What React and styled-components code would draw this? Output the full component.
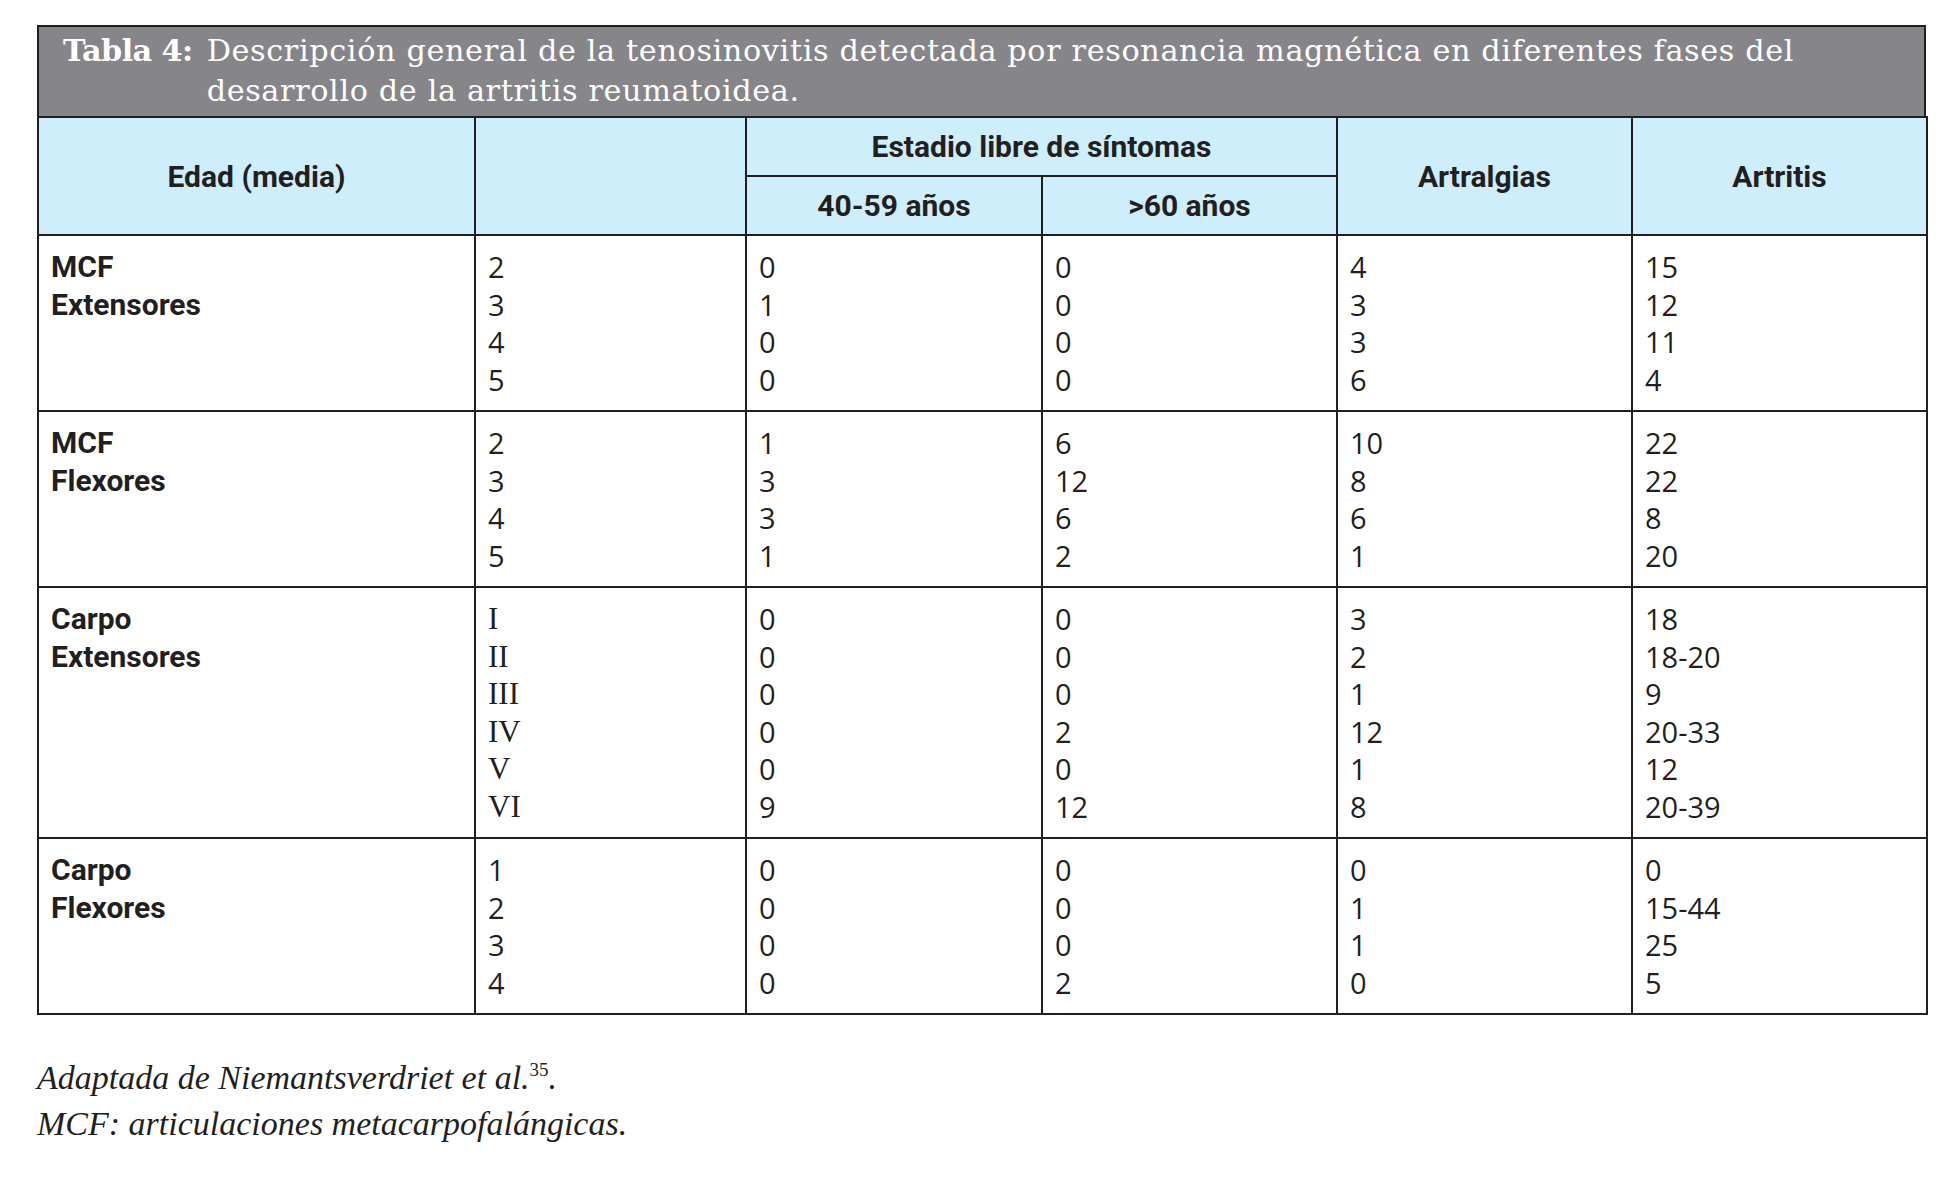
import React from "react";
import styled, { createGlobalStyle } from "styled-components";

const Global = createGlobalStyle`
  html, body { margin: 0; padding: 0; background: #ffffff; }
  body { font-family: "Open Sans", sans-serif; color: #231f20; }
`;

const Page = styled.div`
  padding: 25px 0 0 37px;
  width: 1889px;
`;

const TitleBar = styled.div`
  display: flex;
  gap: 14px;
  background: #868589;
  border: 2px solid #231f20;
  border-bottom: none;
  padding: 4px 24px 5px 24px;
  color: #ffffff;
  font-family: "DejaVu Serif", serif;
  font-size: 30.3px;
  line-height: 40px;
`;

const TitleLabel = styled.span`
  font-weight: 700;
  letter-spacing: -0.6px;
  white-space: nowrap;
`;

const TitleText = styled.span`
  font-weight: 400;
  letter-spacing: 0.62px;
  white-space: nowrap;
`;

const Table = styled.table`
  border-collapse: collapse;
  table-layout: fixed;
  width: 1889px;
`;

const HeadCell = styled.th`
  background: #cdeefa;
  border: 2px solid #231f20;
  height: 57px;
  padding: 0;
  text-align: center;
  vertical-align: middle;
  font-family: Roboto, sans-serif;
  font-weight: 700;
  font-size: 30px;
  color: #231f20;
`;

const Cell = styled.td`
  border: 2px solid #231f20;
  padding: 12px 12px 12px 12px;
  vertical-align: top;
  font-family: ${(p) => (p.$serif ? '"Liberation Serif", serif' : '"Open Sans", sans-serif')};
  font-size: ${(p) => (p.$serif ? "31px" : "29px")};
  line-height: 37.5px;
  color: #231f20;
`;

const Label = styled.div`
  font-family: Roboto, sans-serif;
  font-weight: 700;
  font-size: 30px;
  line-height: 37.5px;
`;

const Line = styled.div`
  white-space: nowrap;
`;

const Notes = styled.div`
  margin-top: 40px;
  font-family: "Liberation Serif", serif;
  font-style: italic;
  font-size: 34px;
  line-height: 46px;
  color: #231f20;
`;

const Sup = styled.sup`
  font-size: 19px;
  font-style: normal;
  line-height: 0;
  vertical-align: 13px;
`;

const rows = [
  {
    label: ["MCF", "Extensores"],
    cols: [
      ["2", "3", "4", "5"],
      ["0", "1", "0", "0"],
      ["0", "0", "0", "0"],
      ["4", "3", "3", "6"],
      ["15", "12", "11", "4"],
    ],
  },
  {
    label: ["MCF", "Flexores"],
    cols: [
      ["2", "3", "4", "5"],
      ["1", "3", "3", "1"],
      ["6", "12", "6", "2"],
      ["10", "8", "6", "1"],
      ["22", "22", "8", "20"],
    ],
  },
  {
    label: ["Carpo", "Extensores"],
    serif: true,
    cols: [
      ["I", "II", "III", "IV", "V", "VI"],
      ["0", "0", "0", "0", "0", "9"],
      ["0", "0", "0", "2", "0", "12"],
      ["3", "2", "1", "12", "1", "8"],
      ["18", "18-20", "9", "20-33", "12", "20-39"],
    ],
  },
  {
    label: ["Carpo", "Flexores"],
    cols: [
      ["1", "2", "3", "4"],
      ["0", "0", "0", "0"],
      ["0", "0", "0", "2"],
      ["0", "1", "1", "0"],
      ["0", "15-44", "25", "5"],
    ],
  },
];

export default function App() {
  return (
    <Page>
      <Global />
      <TitleBar>
        <TitleLabel>Tabla 4:</TitleLabel>
        <TitleText>
          Descripción general de la tenosinovitis detectada por resonancia magnética en diferentes fases del
          <br />
          desarrollo de la artritis reumatoidea.
        </TitleText>
      </TitleBar>
      <Table>
        <colgroup>
          <col style={{ width: 437 }} />
          <col style={{ width: 271 }} />
          <col style={{ width: 296 }} />
          <col style={{ width: 295 }} />
          <col style={{ width: 295 }} />
          <col style={{ width: 295 }} />
        </colgroup>
        <thead>
          <tr>
            <HeadCell rowSpan={2}>Edad (media)</HeadCell>
            <HeadCell rowSpan={2}></HeadCell>
            <HeadCell colSpan={2}>Estadio libre de síntomas</HeadCell>
            <HeadCell rowSpan={2}>Artralgias</HeadCell>
            <HeadCell rowSpan={2}>Artritis</HeadCell>
          </tr>
          <tr>
            <HeadCell>40-59 años</HeadCell>
            <HeadCell>&gt;60 años</HeadCell>
          </tr>
        </thead>
        <tbody>
          {rows.map((r, i) => (
            <tr key={i}>
              <Cell>
                {r.label.map((l) => (
                  <Label key={l}>{l}</Label>
                ))}
              </Cell>
              {r.cols.map((c, j) => (
                <Cell key={j} $serif={r.serif && j === 0}>
                  {c.map((v, k) => (
                    <Line key={k}>{v}</Line>
                  ))}
                </Cell>
              ))}
            </tr>
          ))}
        </tbody>
      </Table>
      <Notes>
        <div>
          Adaptada de Niemantsverdriet et al.<Sup>35</Sup>.
        </div>
        <div>MCF: articulaciones metacarpofalángicas.</div>
      </Notes>
    </Page>
  );
}
